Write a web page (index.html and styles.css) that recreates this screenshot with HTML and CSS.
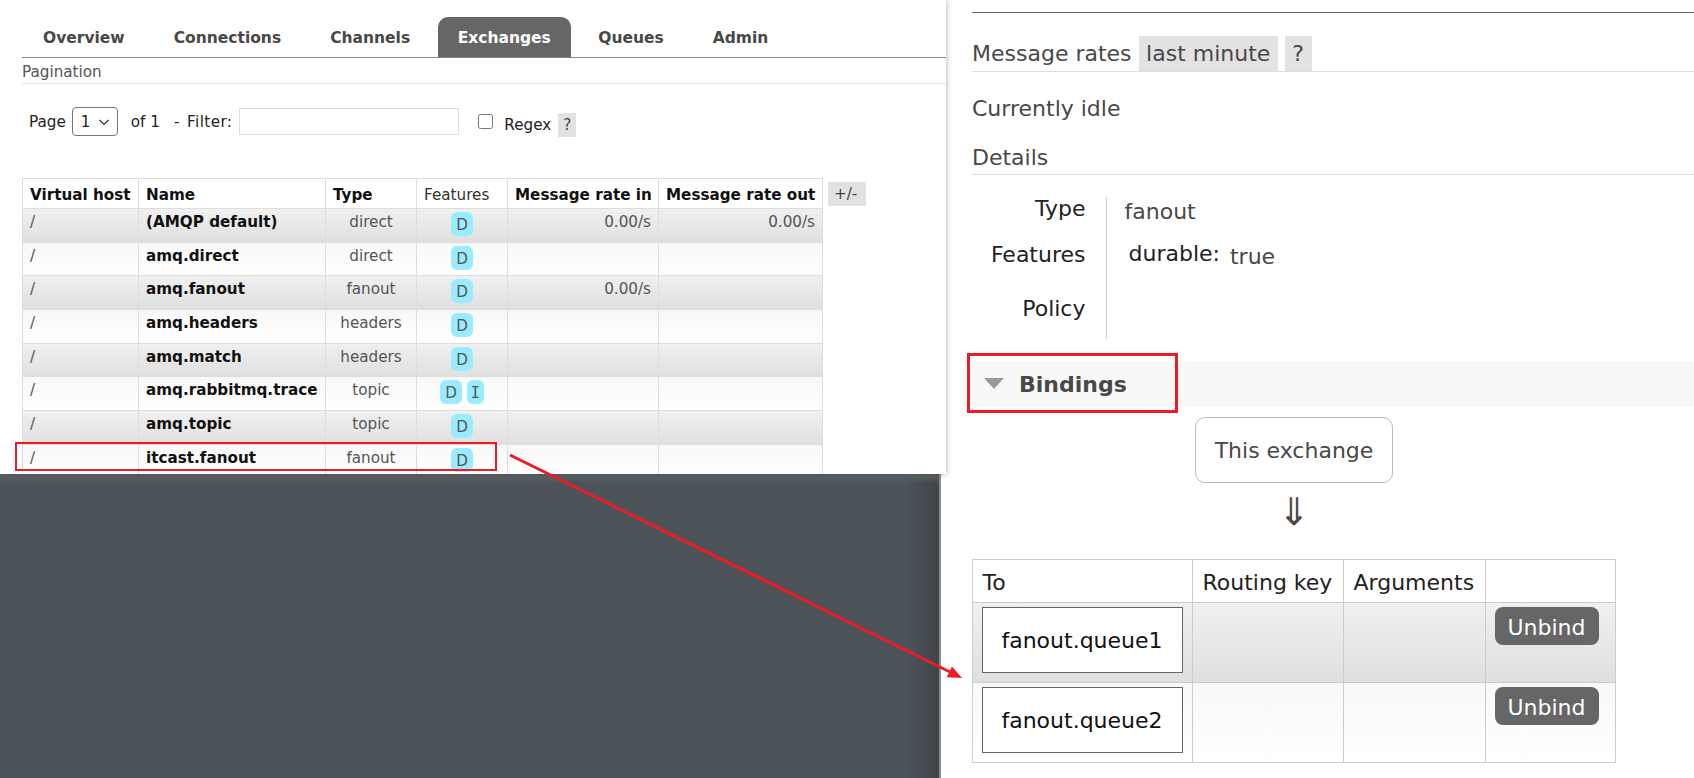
FILE: index.html
```html
<!DOCTYPE html>
<html lang="en">
<head>
    <meta charset="UTF-8">
    <title>RabbitMQ Exchanges</title>
    <link rel="stylesheet" href="styles.css">
</head>
<body>
    <div class="stage">
        <div class="left-col">
            <div class="panel">
                <ul class="tabs">
                    <li>Overview</li>
                    <li>Connections</li>
                    <li>Channels</li>
                    <li class="active">Exchanges</li>
                    <li>Queues</li>
                    <li>Admin</li>
                </ul>
                <div class="pagination-title">Pagination</div>
                <div class="filter-row">
                    <span>Page</span>
                    <select class="page-select"><option>1</option></select>
                    <span class="of">of 1</span>
                    <span class="filter-label">- Filter:</span>
                    <input class="filter-input" type="text">
                    <input class="regex-check" type="checkbox">
                    <span class="regex-label">Regex</span>
                    <span class="help">?</span>
                </div>
                <div class="list-wrap">
                    <table class="list">
                        <colgroup>
                            <col class="c-vhost"><col class="c-name"><col class="c-type"><col class="c-feat"><col class="c-in"><col class="c-out">
                        </colgroup>
                        <thead>
                            <tr>
                                <th>Virtual host</th>
                                <th>Name</th>
                                <th>Type</th>
                                <th class="plain">Features</th>
                                <th>Message rate in</th>
                                <th>Message rate out</th>
                            </tr>
                        </thead>
                        <tbody>
                            <tr class="odd"><td>/</td><td class="name">(AMQP default)</td><td class="center">direct</td><td class="center"><span class="tag">D</span></td><td class="rate">0.00/s</td><td class="rate">0.00/s</td></tr>
                            <tr class="even"><td>/</td><td class="name">amq.direct</td><td class="center">direct</td><td class="center"><span class="tag">D</span></td><td></td><td></td></tr>
                            <tr class="odd"><td>/</td><td class="name">amq.fanout</td><td class="center">fanout</td><td class="center"><span class="tag">D</span></td><td class="rate">0.00/s</td><td></td></tr>
                            <tr class="even"><td>/</td><td class="name">amq.headers</td><td class="center">headers</td><td class="center"><span class="tag">D</span></td><td></td><td></td></tr>
                            <tr class="odd"><td>/</td><td class="name">amq.match</td><td class="center">headers</td><td class="center"><span class="tag">D</span></td><td></td><td></td></tr>
                            <tr class="even"><td>/</td><td class="name">amq.rabbitmq.trace</td><td class="center">topic</td><td class="center"><span class="tag">D</span> <span class="tag narrow">I</span></td><td></td><td></td></tr>
                            <tr class="odd"><td>/</td><td class="name">amq.topic</td><td class="center">topic</td><td class="center"><span class="tag">D</span></td><td></td><td></td></tr>
                            <tr class="even"><td>/</td><td class="name">itcast.fanout</td><td class="center">fanout</td><td class="center"><span class="tag">D</span></td><td></td><td></td></tr>
                        </tbody>
                    </table>
                    <span class="help columns">+/-</span>
                </div>
            </div>
            <div class="desktop"></div>
        </div>

        <div class="right-col">
            <div class="top-rule"></div>
            <div class="section-head rates">
                <span>Message rates</span>
                <span class="chip">last minute</span>
                <span class="chip">?</span>
            </div>
            <p class="idle">Currently idle</p>
            <div class="section-head details-head">Details</div>
            <table class="details">
                <tr class="r-type"><th>Type</th><td>fanout</td></tr>
                <tr class="r-features"><th>Features</th><td><span class="key">durable:</span> <span class="val">true</span></td></tr>
                <tr class="r-policy"><th>Policy</th><td></td></tr>
            </table>
            <div class="bindings-bar">
                <div class="bindings-title"><span class="triangle"></span><span class="bindings-text">Bindings</span></div>
            </div>
            <div class="bindings-body">
                <div class="this-exchange">This exchange</div>
                <div class="down-arrow">⇓</div>
                <table class="bindings">
                    <colgroup>
                        <col class="b-to"><col class="b-key"><col class="b-args"><col class="b-act">
                    </colgroup>
                    <thead>
                        <tr><th>To</th><th>Routing key</th><th>Arguments</th><th></th></tr>
                    </thead>
                    <tbody>
                        <tr class="odd">
                            <td><div class="queue">fanout.queue1</div></td><td></td><td></td>
                            <td><button class="unbind">Unbind</button></td>
                        </tr>
                        <tr class="even">
                            <td><div class="queue">fanout.queue2</div></td><td></td><td></td>
                            <td><button class="unbind">Unbind</button></td>
                        </tr>
                    </tbody>
                </table>
            </div>
        </div>

        <!-- red annotations drawn over the two screenshots -->
        <svg class="marks" width="1694" height="778" viewBox="0 0 1694 778">
            <rect x="16" y="443" width="480" height="27" fill="none" stroke="#ed1c24" stroke-width="2"/>
            <line x1="510" y1="455" x2="950" y2="672" stroke="#ed1c24" stroke-width="3"/>
            <polygon points="962,678 946.8,677.2 952,666.4" fill="#ed1c24"/>
        </svg>
    </div>
</body>
</html>
```

FILE: styles.css
```css
* {
    box-sizing: border-box;
}
body {
    margin: 0;
    background-color: #fff;
    font-family: "DejaVu Sans", Verdana, sans-serif;
    color: #484848;
}
.stage {
    position: relative;
    display: flex;
    width: 1694px;
    height: 778px;
    overflow: hidden;
}
.marks {
    position: absolute;
    left: 0;
    top: 0;
    z-index: 2;
    pointer-events: none;
}

/* left screenshot */
.left-col {
    display: flex;
    flex-direction: column;
    width: 946px;
    flex: none;
}
.panel {
    position: relative;
    z-index: 1;
    width: 946px;
    height: 474px;
    padding-left: 22px;
    overflow: hidden;
    background-color: #fff;
    box-shadow: 0 0 6px rgba(0, 0, 0, 0.35);
    font-size: 15.2px;
}
.desktop {
    flex: 1;
    width: 941px;
    border-right: 2px solid #8a8d8f;
    background-color: #4c5359;
    background-image:
        linear-gradient(to bottom, #62696c, rgba(76, 83, 89, 0) 9px),
        linear-gradient(to left, #3f4548, rgba(76, 83, 89, 0) 32px);
}
.tabs {
    display: flex;
    height: 58px;
    margin: 0;
    padding: 17px 0 0;
    list-style: none;
    border-bottom: 1px solid #888;
    font-size: 15.5px;
    font-weight: bold;
}
.tabs li {
    padding: 12px 24.5px 0;
    color: #484848;
}
.tabs li:first-child {
    padding-left: 21px;
}
.tabs li.active {
    margin: 0 3px;
    padding: 12px 20px 0;
    border-radius: 10px 10px 0 0;
    background-color: #666;
    color: #fff;
}
.pagination-title {
    height: 26px;
    padding-top: 5px;
    border-bottom: 1px solid #e4e4e4;
    color: #555;
}
.filter-row {
    display: flex;
    align-items: center;
    height: 29px;
    margin-top: 23px;
    padding-left: 7px;
    color: #222;
}
.page-select {
    appearance: none;
    width: 46px;
    height: 29px;
    margin-left: 6px;
    padding-left: 8px;
    font-family: inherit;
    font-size: 15.2px;
    background: #fff url('data:image/svg+xml,%3Csvg xmlns="http://www.w3.org/2000/svg" width="12" height="8" viewBox="0 0 12 8"%3E%3Cpath d="M1.5 2l4.5 4.5L10.5 2" fill="none" stroke="%23333" stroke-width="1.2"/%3E%3C/svg%3E') no-repeat right 7px center;
    border: 1px solid #767676;
    border-radius: 4px;
    color: #222;
}
.of {
    margin-left: 13px;
}
.filter-label {
    margin-left: 14px;
    word-spacing: 2px;
    letter-spacing: 0.4px;
}
.filter-input {
    width: 220px;
    height: 27px;
    margin: 0 0 0 7px;
    border: 1px solid #ddd;
}
.regex-check {
    width: 15px;
    height: 15px;
    margin: 0 0 0 19px;
}
.regex-label {
    margin: 6px 0 0 11px;
}
.help {
    display: inline-block;
    margin: 6px 0 0 7px;
    padding: 4px 5px;
    background-color: #e2e2e2;
    color: #444;
    line-height: 16px;
}
.list-wrap {
    display: flex;
    align-items: flex-start;
    margin-top: 42px;
}
.help.columns {
    margin: 4px 0 0 5px;
    padding: 4px 6px;
    width: 38px;
    white-space: nowrap;
}
.list {
    flex: none;
    width: 800px;
    table-layout: fixed;
    border-collapse: collapse;
    border: 1px solid #ddd;
}
.c-vhost { width: 116px; }
.c-name { width: 187px; }
.c-type { width: 91px; }
.c-feat { width: 91px; }
.c-in { width: 151px; }
.c-out { width: 164px; }
.list th, .list td {
    padding: 0 7px;
    border: 1px solid #ddd;
    white-space: nowrap;
    overflow: hidden;
}
.list th {
    height: 30px;
    padding-top: 2px;
    text-align: left;
    color: #111;
}
.list th.plain {
    font-weight: normal;
    color: #333;
}
.list td {
    height: 33.7px;
    padding-top: 3px;
    vertical-align: top;
    line-height: 21px;
    color: #555;
}
.list .name {
    font-weight: bold;
    color: #111;
}
.center {
    text-align: center;
}
.list .rate {
    text-align: right;
}
.odd {
    background-image: linear-gradient(to bottom, #f0f0f0, #dfdfdf);
}
.even {
    background-image: linear-gradient(to bottom, #f8f8f8, #fff);
}
.tag {
    display: inline-block;
    width: 22px;
    height: 24px;
    border-radius: 6px;
    background-color: #99ebff;
    color: #555;
    line-height: 26px;
    text-align: center;
    vertical-align: top;
}
.tag.narrow {
    width: 17px;
    font-family: "DejaVu Sans Mono", monospace;
}

/* right screenshot */
.right-col {
    flex: 1;
    min-width: 0;
    padding: 12px 0 0 26px;
    font-size: 22px;
}
.top-rule {
    height: 1px;
    background-color: #666;
}
.section-head {
    border-bottom: 1px solid #ddd;
}
.rates {
    display: flex;
    align-items: center;
    gap: 7px;
    height: 36px;
    margin-top: 23px;
}
.chip {
    display: flex;
    align-items: center;
    height: 35px;
    padding: 0 7.5px;
    background-color: #e2e2e2;
}
.idle {
    margin: 24px 0 0;
    line-height: 26px;
}
.details-head {
    height: 30px;
    margin-top: 23px;
    line-height: 26px;
}
.details {
    margin-top: 22px;
    border-collapse: collapse;
    line-height: 24px;
}
.details th {
    width: 134px;
    padding: 2px 20px 0 0;
    border-right: 1px solid #ccc;
    font-weight: normal;
    text-align: right;
    color: #222;
}
.details td {
    padding: 3px 0 0 18px;
}
.r-type th, .r-type td {
    height: 34px;
}
.r-type th {
    padding: 0 20px 10px 0;
}
.r-type td {
    padding: 0 0 4px 18px;
}
.r-features th, .r-features td {
    height: 46px;
}
.r-policy th, .r-policy td {
    height: 62px;
}
.key {
    margin-left: 4px;
    color: #222;
}
.val {
    margin-left: 3px;
    vertical-align: -3px;
}
.bindings-bar {
    height: 46px;
    margin-top: 22px;
    background-color: #f8f8f8;
}
.bindings-title {
    display: inline-flex;
    align-items: center;
    width: 211px;
    height: 60px;
    margin: -8px 0 0 -5px;
    padding-left: 14px;
    border: 3px solid #ed1c24;
    font-weight: bold;
    color: #484848;
}
.bindings-text {
    padding-top: 2px;
}
.triangle {
    width: 0;
    height: 0;
    margin-right: 15px;
    border-left: 10.5px solid transparent;
    border-right: 10.5px solid transparent;
    border-top: 11px solid #999;
}
.bindings-body {
    display: flex;
    flex-direction: column;
    align-items: center;
    width: 644px;
}
.this-exchange {
    display: flex;
    align-items: center;
    justify-content: center;
    width: 198px;
    height: 66px;
    margin-top: 10px;
    border: 1px solid #bbb;
    border-radius: 10px;
}
.down-arrow {
    height: 76px;
    padding-top: 8px;
    font-size: 38px;
    line-height: 42px;
}
.bindings {
    width: 643px;
    margin-right: 1px;
    table-layout: fixed;
    border-collapse: collapse;
    border: 1px solid #ccc;
}
.b-to { width: 220px; }
.b-key { width: 151px; }
.b-args { width: 142px; }
.b-act { width: 130px; }
.bindings th, .bindings td {
    border: 1px solid #ccc;
}
.bindings th {
    height: 43px;
    padding: 2px 10px 0;
    font-weight: normal;
    text-align: left;
    color: #222;
    white-space: nowrap;
}
.bindings td {
    height: 80px;
    padding: 4px 9px;
    vertical-align: top;
}
.queue {
    display: flex;
    align-items: center;
    justify-content: center;
    width: 201px;
    height: 66px;
    padding-top: 1px;
    border: 1px solid #666;
    background-color: #fff;
    color: #111;
}
.unbind {
    width: 104px;
    height: 38px;
    padding: 2px 0 0;
    border: none;
    border-radius: 8px;
    background-color: #666;
    color: #fff;
    font-family: inherit;
    font-size: 22px;
}
```
